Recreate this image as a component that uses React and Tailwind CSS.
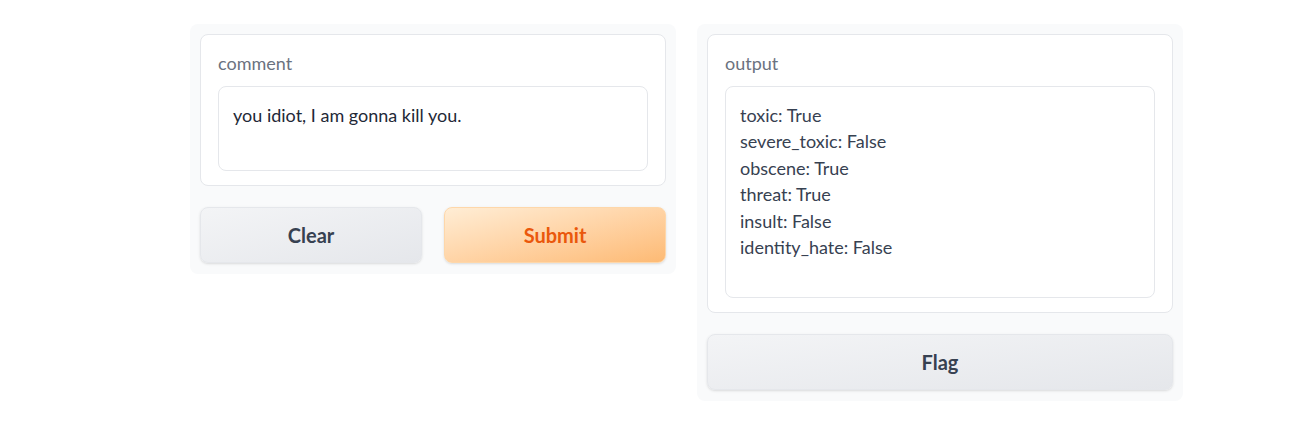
import React from "react";

const font = { fontFamily: "Lato, 'Noto Sans', sans-serif" };

const results = [
  "toxic: True",
  "severe_toxic: False",
  "obscene: True",
  "threat: True",
  "insult: False",
  "identity_hate: False",
];

function Panel({ children }) {
  return (
    <div className="w-[486px] rounded-lg bg-[#f9fafb] pt-[10px] px-[10px] pb-[11px] flex flex-col gap-[21px]">
      {children}
    </div>
  );
}

function Card({ label, children }) {
  return (
    <div className="rounded-lg border border-[#e5e7eb] bg-white pt-[16px] pb-[14px] px-[17px]">
      <div className="text-[18px] leading-[24px] text-[#6b7280] mb-[11px]">{label}</div>
      {children}
    </div>
  );
}

function Button({ children, primary }) {
  return (
    <button
      className={
        "h-[56px] flex-1 rounded-lg border text-[20px] font-bold shadow-sm " +
        (primary
          ? "border-[#fed7aa] bg-gradient-to-br from-[#ffedd5] to-[#fdba74] text-[#ea580c]"
          : "border-[#e5e7eb] bg-gradient-to-br from-[#f3f4f6] to-[#e5e7eb] text-[#374151]")
      }
    >
      {children}
    </button>
  );
}

export default function App() {
  return (
    <div className="min-h-[426px] bg-white pt-[24px] pl-[190px]" style={font}>
      <div className="flex items-start gap-[21px]">
        <Panel>
          <Card label="comment">
            <div className="h-[85px] rounded-lg border border-[#e5e7eb] px-[14px] pt-[15px] text-[18px] leading-[26px] text-[#1f2937]">
              you idiot, I am gonna kill you.
            </div>
          </Card>
          <div className="flex gap-[22px]">
            <Button>Clear</Button>
            <Button primary>Submit</Button>
          </div>
        </Panel>
        <Panel>
          <Card label="output">
            <div className="h-[212px] rounded-lg border border-[#e5e7eb] px-[14px] pt-[15px] text-[18px] leading-[26.4px] text-[#374151]">
              {results.map((r) => (
                <div key={r}>{r}</div>
              ))}
            </div>
          </Card>
          <div className="flex">
            <Button>Flag</Button>
          </div>
        </Panel>
      </div>
    </div>
  );
}
